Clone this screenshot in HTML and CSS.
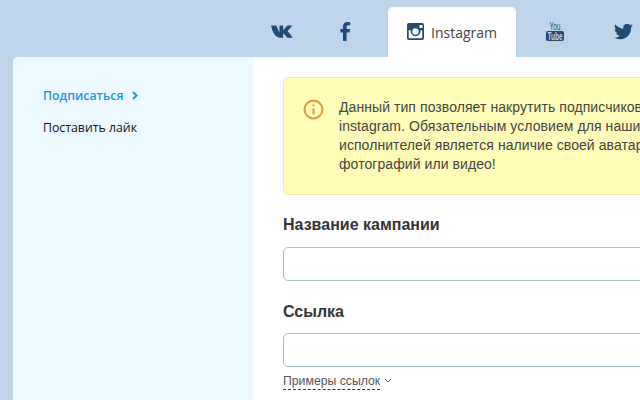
FILE: index.html
```html
<!DOCTYPE html>
<html lang="ru">
<head>
<meta charset="utf-8">
<title>Instagram</title>
<link rel="stylesheet" href="styles.css">
</head>
<body>
<div class="page">
  <nav class="tabs">
    <a class="tab tab-vk"><svg class="ico-vk" viewBox="0 0 22 13"><path d="M0 .5h5.200l3.300 7V.5h3.700v4.700L16.400.5h5L16.600 6l5.200 6.700h-5.400L12.200 8v4.700H9.600C4.500 12.700 1.500 7.500 0 .5z"/></svg></a>
    <a class="tab tab-fb"><svg class="ico-fb" viewBox="0 0 11 19"><path d="M3 19V10.500H.4V7H3V4.600C3 1.600 4.800 0 7.400 0c1.300 0 2.400.1 2.800.2v3.100H8.300c-1.400 0-1.700.7-1.700 1.700V7h3.500l-.5 3.500h-3V19z"/></svg></a>
    <a class="tab tab-active"><svg class="ico-ig" viewBox="0 0 17 17"><path fill-rule="evenodd" d="M2 0h13a2 2 0 0 1 2 2v13a2 2 0 0 1-2 2H2a2 2 0 0 1-2-2V2a2 2 0 0 1 2-2zM12.500 2v3h3V2zM1.700 7.200v7.300c0 .5.300.8.800.8h12c.5 0 .8-.3.800-.8V7.200h-1.800a5 5 0 1 1-9.800 0zM8.500 5.300a3.200 3.200 0 1 0 0 6.400 3.200 3.200 0 0 0 0-6.400z"/></svg><span>Instagram</span></a>
    <a class="tab tab-yt"><svg class="ico-yt" viewBox="0 0 18 20"><text class="yt-you" x="9" y="8.500" text-anchor="middle" textLength="11" lengthAdjust="spacingAndGlyphs">You</text><rect x="0" y="10" width="18" height="10" rx="2"/><text class="yt-tube" x="9" y="18.500" text-anchor="middle" textLength="15" lengthAdjust="spacingAndGlyphs">Tube</text></svg></a>
    <a class="tab tab-tw"><svg class="ico-tw" viewBox="0 0 24 20"><path transform="translate(0 -2.500)" d="M23.953 4.570a10 10 0 0 1-2.825.775 4.958 4.958 0 0 0 2.163-2.723c-.951.555-2.005.959-3.127 1.184a4.920 4.920 0 0 0-8.384 4.482C7.690 8.095 4.067 6.130 1.640 3.162a4.822 4.822 0 0 0-.666 2.475c0 1.710.870 3.213 2.188 4.096a4.904 4.904 0 0 1-2.228-.616v.060a4.923 4.923 0 0 0 3.946 4.827 4.996 4.996 0 0 1-2.212.085 4.936 4.936 0 0 0 4.604 3.417 9.867 9.867 0 0 1-6.102 2.105c-.390 0-.779-.023-1.170-.067a13.995 13.995 0 0 0 7.557 2.209c9.053 0 13.998-7.496 13.998-13.985 0-.210 0-.420-.015-.630A9.935 9.935 0 0 0 24 4.590z"/></svg></a>
  </nav>
  <div class="card">
    <aside class="side">
      <a class="side-link side-current">Подписаться<svg class="chev" viewBox="0 0 6 9"><path d="M1 1l3.500 3.500L1 8"/></svg></a>
      <a class="side-link">Поставить лайк</a>
    </aside>
    <main class="main">
      <div class="alert">
        <svg class="ico-info" viewBox="0 0 20 20"><circle cx="10" cy="10" r="8.500"/><path d="M10 9v5.500M10 5.300v1.700"/></svg>
        <p>Данный тип позволяет накрутить подписчиков в социальной сети<br>instagram. Обязательным условием для наших новых подписчиков и<br>исполнителей является наличие своей аватарки, а также нескольких<br>фотографий или видео!</p>
      </div>
      <label class="lbl">Название кампании</label>
      <input class="field" type="text">
      <label class="lbl lbl-second">Ссылка</label>
      <input class="field" type="text">
      <a class="examples"><span>Примеры ссылок</span><svg class="caret" viewBox="0 0 8 5"><path d="M1 1l3 3 3-3"/></svg></a>
    </main>
  </div>
</div>
</body>
</html>
```
FILE: styles.css
```css
html, body {
  margin: 0;
  padding: 0;
  height: 400px;
  overflow: hidden;
}
.page {
  width: 640px;
  height: 400px;
  overflow: hidden;
  background: #bdd4e9;
  font-family: "Liberation Sans", Arial, sans-serif;
}
.tabs {
  display: flex;
  height: 50px;
  padding: 7px 0 0 249px;
  width: 800px;
}
.tab {
  display: flex;
  align-items: center;
  justify-content: center;
  flex: none;
  color: #1f4b75;
  fill: #1f4b75;
}
.tab-vk, .tab-fb { width: 64px; padding-bottom: 2px; box-sizing: border-box; }
.tab-vk { padding-left: 2px; }
.tab-fb { margin-right: 11px; }
.tab-yt, .tab-tw { width: 68px; }
.tab-yt { margin-left: 5px; padding-bottom: 2px; box-sizing: border-box; }
.tab-active {
  width: 128px;
  height: 50px;
  gap: 7px;
  background: #fff;
  border-radius: 5px 5px 0 0;
  font: 14px "Open Sans", sans-serif;
  color: #444;
}
.ico-vk { width: 22px; height: 13px; }
.ico-fb { width: 11px; height: 19px; }
.ico-ig { width: 17px; height: 17px; margin-bottom: 1px; }
.ico-yt { width: 18px; height: 20px; overflow: visible; }
.ico-tw { width: 19px; height: 16px; }
.yt-you { font: 10px "Liberation Sans", sans-serif; fill: #2b5278; }
.yt-tube { font: bold 10px "Liberation Sans", sans-serif; fill: #c4d9ec; }
.card {
  display: flex;
  margin-left: 13px;
  height: 343px;
  width: 800px;
  border-radius: 5px 0 0 0;
  overflow: hidden;
  background: #fff;
}
.side {
  flex: none;
  display: flex;
  flex-direction: column;
  align-items: flex-start;
  gap: 15px;
  width: 240px;
  box-sizing: border-box;
  padding: 30px 0 0 30px;
  background: #ecf9ff;
}
.side-link {
  display: flex;
  align-items: center;
  gap: 9px;
  font: 12.3px/17px "Open Sans", sans-serif;
  color: #111;
}
.side-current {
  color: #2296d8;
  font-weight: 600;
}
.chev { width: 6px; height: 9px; fill: none; stroke: #2296d8; stroke-width: 2; }
.main {
  flex: 1;
  padding: 20px 0 0 30px;
  display: flex;
  flex-direction: column;
  align-items: flex-start;
}
.alert {
  display: flex;
  gap: 15px;
  box-sizing: border-box;
  width: 520px;
  height: 118px;
  padding: 20px 19px;
  background: #fffdb8;
  border: 1px solid #f0eaa8;
  border-radius: 5px;
}
.alert p {
  margin: 0;
  white-space: nowrap;
  font-size: 14px;
  line-height: 19px;
  letter-spacing: .07px;
  color: #444;
}
.ico-info {
  flex: none;
  width: 21px;
  height: 21px;
  margin-top: 1px;
  fill: none;
  stroke: #e49b3f;
  stroke-width: 2;
}
.lbl {
  margin-top: 20px;
  font-size: 16px;
  font-weight: bold;
  line-height: 20px;
  color: #333;
}
.lbl-second { margin-top: 21px; }
.field {
  display: block;
  box-sizing: border-box;
  width: 520px;
  height: 34px;
  margin-top: 12px;
  padding: 0 10px;
  background: #fff;
  border: 1px solid #a6c0c8;
  border-radius: 5px;
}
.lbl-second + .field { margin-top: 11px; }
.examples {
  display: flex;
  align-items: center;
  gap: 4px;
  margin-top: 6px;
  font-size: 12.25px;
  line-height: 16px;
  color: #555;
}
.examples span { border-bottom: 1px dashed #333; }
.caret { width: 8px; height: 5px; fill: none; stroke: #666; stroke-width: 1; margin-bottom: 2px; }
```
